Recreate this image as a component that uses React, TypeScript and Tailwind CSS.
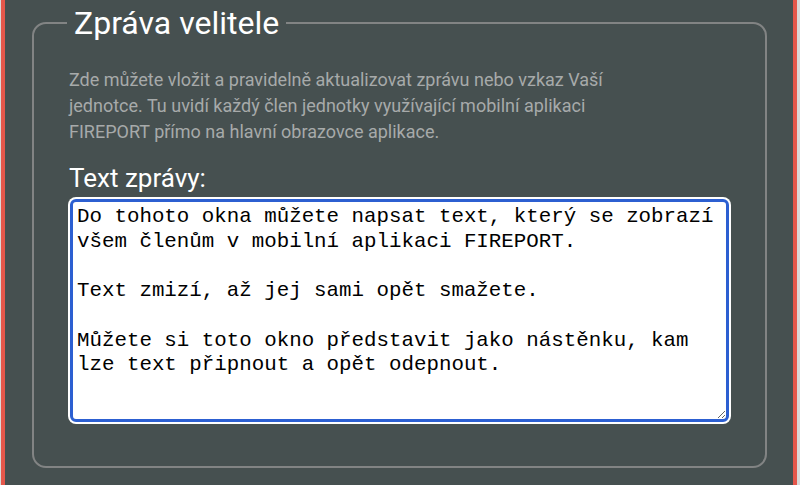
import React from "react";

const message = `Do tohoto okna můžete napsat text, který se zobrazí
všem členům v mobilní aplikaci FIREPORT.

Text zmizí, až jej sami opět smažete.

Můžete si toto okno představit jako nástěnku, kam
lze text připnout a opět odepnout.`;

export default function App() {
  return (
    <div
      className="flex h-[485px] w-[800px] overflow-hidden bg-[#465050]"
      style={{ fontFamily: "Roboto, 'Noto Sans', sans-serif" }}
    >
      <div className="w-[1px] bg-[#d9d9d9]" />
      <div className="w-[4px] bg-[#e5574b]" />
      <div className="flex-1 pl-[27px] pr-[26px] pt-[4px]">
        <fieldset className="h-[464px] rounded-[14px] border-[2.5px] border-[#828484] px-[35px]">
          <legend className="-ml-[2px] px-[7px] text-[32px] leading-[38px] text-white">
            Zpráva velitele
          </legend>
          <p className="mt-[25px] text-[18px] leading-[26px] text-[#a7aaaa]">
            Zde můžete vložit a pravidelně aktualizovat zprávu nebo vzkaz Vaší
            <br />
            jednotce. Tu uvidí každý člen jednotky využívající mobilní aplikaci
            <br />
            FIREPORT přímo na hlavní obrazovce aplikace.
          </p>
          <label className="mt-[18px] block text-[26px] leading-[30px] text-white">
            Text zprávy:
          </label>
          <div className="-mx-[1px] mt-[4px] rounded-[8px] bg-white p-[2px]">
            <textarea
              className="block h-[223px] w-full resize-y rounded-[6px] border-[3px] border-[#2c5fd1] bg-white px-[4px] pt-[3px] text-[20.8px] leading-[24.7px] text-black outline-none"
              style={{ fontFamily: "'Liberation Mono', 'Courier New', monospace" }}
              defaultValue={message}
            />
          </div>
        </fieldset>
      </div>
      <div className="w-[4px] bg-[#e5574b]" />
      <div className="w-[3px] bg-[#d9d9d9]" />
    </div>
  );
}
